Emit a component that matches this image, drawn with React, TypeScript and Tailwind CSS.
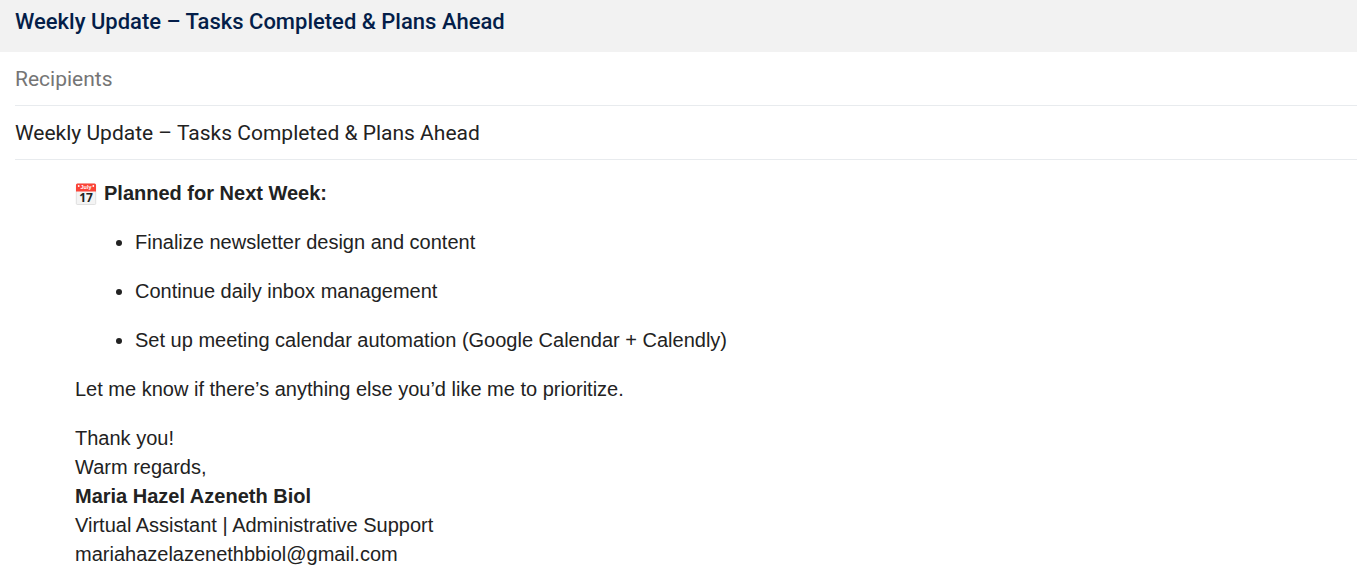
const plans = [
  'Finalize newsletter design and content',
  'Continue daily inbox management',
  'Set up meeting calendar automation (Google Calendar + Calendly)',
];

function CalendarIcon() {
  return (
    <svg viewBox="0 0 22 22" className="size-[22px] shrink-0" role="img" aria-label="Calendar">
      <rect x="1.300" y="1" width="19.400" height="20.500" rx="1" fill="#f4f4f4" stroke="#d6d6d6" strokeWidth="0.700" />
      <path d="M1 8.500V2Q1 0.500 2.500 0.500H19.500Q21 0.500 21 2V8.500Z" fill="#fb4438" />
      <circle cx="3.700" cy="3" r="0.900" fill="#fff" />
      <circle cx="18.300" cy="3" r="0.900" fill="#fff" />
      <text x="11" y="6.300" textAnchor="middle" fontSize="5.500" fontWeight="700" fill="#fff">July</text>
      <text x="11" y="19" textAnchor="middle" fontSize="12" fontWeight="700" fill="#222" className="font-['Open_Sans',sans-serif]">17</text>
    </svg>
  );
}

export default function App() {
  return (
    <main className="min-h-screen bg-white font-['Liberation_Sans',Arial,sans-serif] text-xl text-[#222222]">
      <header className="flex h-[52px] items-start bg-[#f2f2f2] px-[15px] pt-[6px] font-['Roboto',sans-serif] text-[22px] leading-8">
        <h1 className="font-medium text-[#041e49]">Weekly Update – Tasks Completed &amp; Plans Ahead</h1>
      </header>
      <form className="pl-[15px] font-['Roboto',sans-serif] text-[21px]">
        <input aria-label="Recipients" placeholder="Recipients" className="block h-[54px] w-full border-b border-[#e8ebee] outline-none placeholder:text-[#757575]" />
        <input aria-label="Subject" defaultValue="Weekly Update – Tasks Completed & Plans Ahead" className="block h-[54px] w-full border-b border-[#e8ebee] outline-none" />
      </form>
      <article className="flex flex-col gap-5 px-[75px] pt-[19px] leading-[29px]">
        <h2 className="flex items-center gap-[7px] font-bold"><CalendarIcon />Planned for Next Week:</h2>
        <ul className="flex list-disc flex-col gap-5 pl-[60px]">
          {plans.map((plan) => <li key={plan}>{plan}</li>)}
        </ul>
        <p>Let me know if there’s anything else you’d like me to prioritize.</p>
        <p>
          Thank you!<br />Warm regards,<br />
          <strong>Maria Hazel Azeneth Biol</strong><br />
          Virtual Assistant | Administrative Support<br />
          mariahazelazenethbbiol@gmail.com
        </p>
      </article>
    </main>
  );
}
